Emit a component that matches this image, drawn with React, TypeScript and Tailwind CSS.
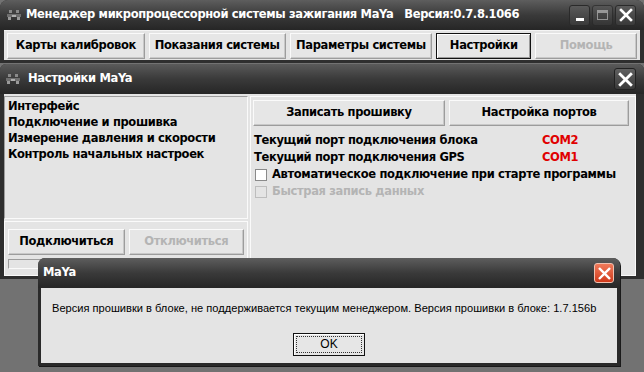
import React from "react";

const font = "font-['Tahoma','DejaVu_Sans',sans-serif]";

const AppIcon = () => (
  <svg width="14" height="10" viewBox="0 0 14 10" className="shrink-0">
    <rect x="2" y="0" width="3" height="3" fill="#8a8a8a" />
    <rect x="9" y="0" width="3" height="3" fill="#8a8a8a" />
    <rect x="0" y="4" width="14" height="3" fill="#6f6f6f" />
    <rect x="1" y="7" width="3" height="3" fill="#9a9a9a" />
    <rect x="10" y="7" width="3" height="3" fill="#9a9a9a" />
    <rect x="5" y="5" width="4" height="2" fill="#b0b0b0" />
  </svg>
);

const XGlyph = ({ size = 14 }: { size?: number }) => (
  <svg width={size} height={size} viewBox="0 0 14 14">
    <path d="M2 2 L12 12 M12 2 L2 12" stroke="#fff" strokeWidth="2.6" strokeLinecap="square" />
  </svg>
);

const CapButton = ({ children, dim }: { children: React.ReactNode; dim?: boolean }) => (
  <div
    className={`w-[21px] h-[21px] rounded-[3px] border border-[#2a2a2a] bg-gradient-to-b from-[#5a5a5a] to-[#3a3a3a] flex items-center justify-center ${dim ? "opacity-70" : ""}`}
  >
    {children}
  </div>
);

const Btn = ({
  label,
  w,
  disabled,
  pressed,
}: {
  label: string;
  w: string;
  disabled?: boolean;
  pressed?: boolean;
}) => (
  <div
    className={`${w} h-[26px] flex items-center justify-center text-[11.5px] font-bold ${
      pressed
        ? "border border-[#111] shadow-[inset_1px_1px_0_#fff,inset_-1px_-1px_0_#9a9a9a]"
        : "border border-t-[#fafafa] border-l-[#fafafa] border-r-[#9c9c9c] border-b-[#9c9c9c] shadow-[inset_-1px_-1px_0_#c8c8c8]"
    } bg-[#e6e6e6] ${disabled ? "text-[#b4b4b4]" : "text-black"}`}
  >
    {label}
  </div>
);

export default function App() {
  return (
    <div className={`relative w-[644px] h-[372px] overflow-hidden bg-[#727272] ${font} tracking-[-0.35px]`}>
      {/* main window */}
      <div className="flex flex-col bg-[#2e2e2e] rounded-t-[8px]">
        <div className="h-[30px] flex items-center pl-[7px] pr-[4px] gap-[5px] rounded-t-[8px] bg-gradient-to-b from-[#5e5e5e] via-[#3a3a3a] to-[#262626]">
          <AppIcon />
          <span className="text-white font-bold text-[11.5px] flex-1">
            Менеджер микропроцессорной системы зажигания MaYa&nbsp;&nbsp;&nbsp;Версия:0.7.8.1066
          </span>
          <div className="flex gap-[2px] mr-[4px]">
            <CapButton>
              <div className="w-[8px] h-[3px] bg-white mt-[9px]" />
            </CapButton>
            <CapButton dim>
              <div className="w-[11px] h-[10px] border border-[#bdbdbd] border-t-[3px]" />
            </CapButton>
            <CapButton>
              <XGlyph />
            </CapButton>
          </div>
        </div>
        <div className="mx-[4px] h-[30px] bg-[#e4e4e4] flex items-center gap-[4px] px-[3px] border-t border-[#f4f4f4]">
          <Btn label="Карты калибровок" w="w-[138px]" />
          <Btn label="Показания системы" w="w-[137px]" />
          <Btn label="Параметры системы" w="w-[143px]" />
          <Btn label="Настройки" w="w-[95px]" pressed />
          <Btn label="Помощь" w="w-[102px]" disabled />
        </div>
        <div className="h-[3px]" />
      </div>

      {/* settings window */}
      <div className="mt-[1px] h-[215px] flex flex-col bg-[#2e2e2e] rounded-t-[6px]">
        <div className="h-[30px] flex items-center px-[6px] gap-[8px] bg-gradient-to-b from-[#5a5a5a] via-[#3a3a3a] to-[#262626] rounded-t-[6px]">
          <AppIcon />
          <span className="text-white font-bold text-[11.5px] flex-1">Настройки MaYa</span>
          <div className="mr-[2px] w-[22px] h-[22px] rounded-[3px] border border-[#222] bg-gradient-to-b from-[#606060] to-[#3a3a3a] flex items-center justify-center">
            <XGlyph size={15} />
          </div>
        </div>
        <div className="flex-1 mx-[4px] mr-[8px] mb-[3px] bg-[#e4e4e4] flex gap-[2px] pt-[2px]">
          {/* left */}
          <div className="w-[244px] flex flex-col">
            <div className="h-[123px] border border-t-[#9c9c9c] border-l-[#9c9c9c] border-r-[#fafafa] border-b-[#fafafa] pl-[3px] pt-[1px] text-[11.5px] font-bold leading-[16px] text-black">
              <div>Интерфейс</div>
              <div>Подключение и прошивка</div>
              <div>Измерение давления и скорости</div>
              <div>Контроль начальных настроек</div>
            </div>
            <div className="flex-1 mt-[2px] border border-[#fafafa] px-[3px] pt-[7px] flex flex-col gap-[4px]">
              <div className="flex gap-[4px]">
                <Btn label="Подключиться" w="w-[117px]" />
                <Btn label="Отключиться" w="w-[116px]" disabled />
              </div>
              <div className="w-[236px] h-[10px] border border-t-[#9c9c9c] border-l-[#9c9c9c] border-r-[#fafafa] border-b-[#fafafa]" />
            </div>
          </div>
          {/* right */}
          <div className="flex-1 border border-[#fafafa] pl-[2px] pt-[3px] text-[11.5px] font-bold text-black">
            <div className="flex gap-[4px]">
              <Btn label="Записать прошивку" w="w-[192px]" />
              <Btn label="Настройка портов" w="w-[180px]" />
            </div>
            <div className="mt-[6px] leading-[17px]">
              <div className="flex pl-[1px]">
                <span className="w-[288px]">Текущий порт подключения блока</span>
                <span className="text-[#e00000]">COM2</span>
              </div>
              <div className="flex pl-[1px]">
                <span className="w-[288px]">Текущий порт подключения GPS</span>
                <span className="text-[#e00000]">COM1</span>
              </div>
              <div className="flex items-center gap-[5px] pl-[2px]">
                <div className="w-[12px] h-[12px] bg-white border border-[#8a8a8a]" />
                <span>Автоматическое подключение при старте программы</span>
              </div>
              <div className="flex items-center gap-[5px] pl-[2px] text-[#b4b4b4]">
                <div className="w-[12px] h-[12px] bg-[#e4e4e4] border border-[#bdbdbd]" />
                <span>Быстрая запись данных</span>
              </div>
            </div>
          </div>
        </div>
      </div>

      {/* message dialog */}
      <div className="absolute left-[38px] top-[258px] w-[582px] h-[108px] flex flex-col bg-[#2a2a2a] rounded-t-[7px] shadow-[1px_1px_0_#1a1a1a]">
        <div className="h-[30px] flex items-center pl-[5px] pr-[6px] rounded-t-[7px] bg-gradient-to-b from-[#5e5e5e] via-[#3a3a3a] to-[#262626]">
          <span className="text-white font-bold text-[11.5px] flex-1">MaYa</span>
          <div className="w-[20px] h-[20px] rounded-[3px] border border-[#f0c0b0] bg-gradient-to-b from-[#f07a5a] to-[#d03818] flex items-center justify-center">
            <XGlyph size={13} />
          </div>
        </div>
        <div className="flex-1 mx-[3px] mb-[3px] bg-[#e4e4e4] flex flex-col items-center pt-[12px]">
          <div className="self-start pl-[11px] whitespace-nowrap text-[11.1px] font-['Liberation_Sans',sans-serif] tracking-normal text-black">
            Версия прошивки в блоке, не поддерживается текущим менеджером. Версия прошивки в блоке: 1.7.156b
          </div>
          <div className="mt-[16px] w-[72px] h-[23px] border border-[#111] bg-[#e6e6e6] p-[2px] shadow-[inset_1px_1px_0_#fff]">
            <div className="w-full h-full border border-dotted border-[#333] flex items-center justify-center text-[12px] font-['Liberation_Sans',sans-serif] tracking-normal">
              OK
            </div>
          </div>
        </div>
      </div>
    </div>
  );
}
